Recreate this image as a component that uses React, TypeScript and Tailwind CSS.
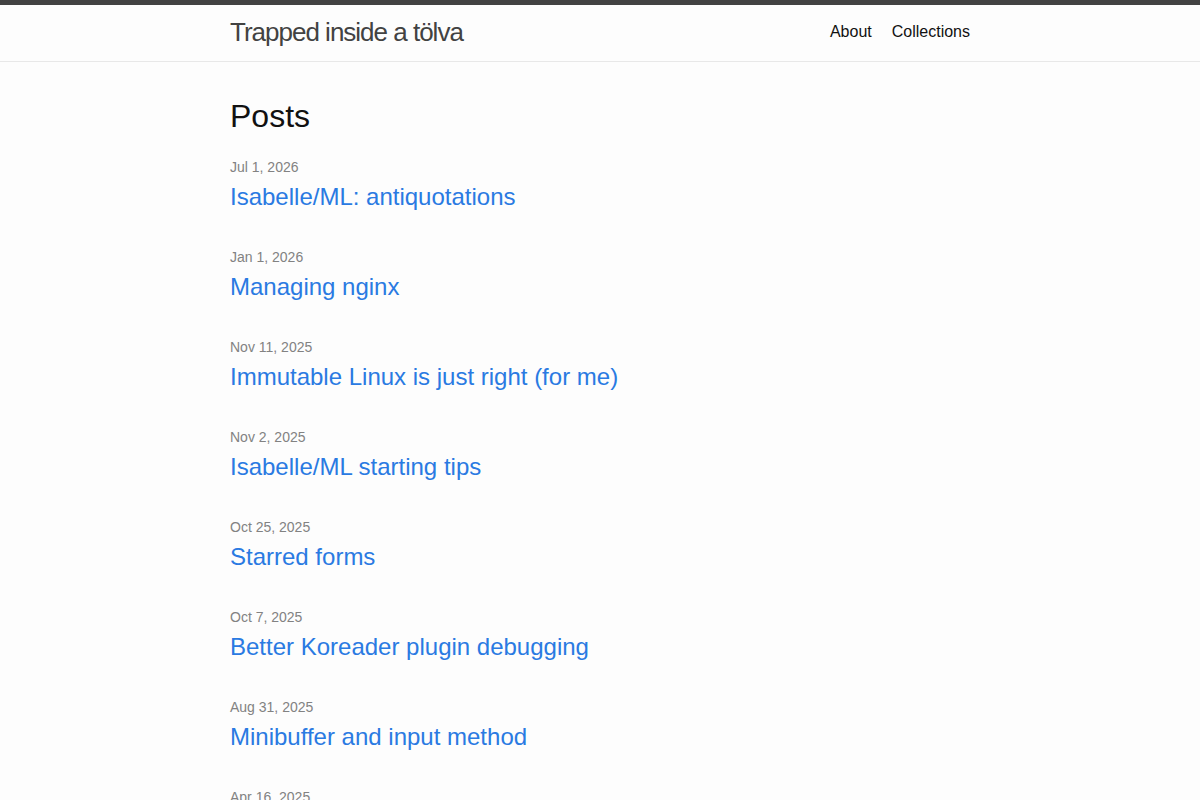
const posts = [
  { date: "Jul 1, 2026", title: "Isabelle/ML: antiquotations" },
  { date: "Jan 1, 2026", title: "Managing nginx" },
  { date: "Nov 11, 2025", title: "Immutable Linux is just right (for me)" },
  { date: "Nov 2, 2025", title: "Isabelle/ML starting tips" },
  { date: "Oct 25, 2025", title: "Starred forms" },
  { date: "Oct 7, 2025", title: "Better Koreader plugin debugging" },
  { date: "Aug 31, 2025", title: "Minibuffer and input method" },
  { date: "Apr 16, 2025", title: "" },
];

export default function App() {
  return (
    <div className="min-h-screen bg-[#fdfdfd] font-['Liberation_Sans',Arial,sans-serif] text-base leading-normal text-[#111]">
      <header className="border-t-[5px] border-b border-t-[#424242] border-b-[#e8e8e8]">
        <div className="mx-auto flex h-14 max-w-[800px] items-start justify-between px-[30px]">
          <a href="#" className="text-[26px] leading-[54px] tracking-[-1px] text-[#424242]">
            Trapped inside a tölva
          </a>
          <nav className="flex gap-5 leading-[54px] text-[#111]">
            <a href="#">About</a>
            <a href="#">Collections</a>
          </nav>
        </div>
      </header>
      <main className="mx-auto max-w-[800px] px-[30px] py-[30px]">
        <h2 className="mb-[17px] text-[32px] leading-[48px]">Posts</h2>
        <ul className="flex flex-col gap-[32px]">
          {posts.map((p) => (
            <li key={p.date}>
              <span className="block text-sm leading-[21px] text-[#828282]">{p.date}</span>
              <h3 className="mt-px text-2xl leading-9">
                <a href="#" className="block text-[#2a7ae2]">
                  {p.title}
                </a>
              </h3>
            </li>
          ))}
        </ul>
      </main>
    </div>
  );
}
